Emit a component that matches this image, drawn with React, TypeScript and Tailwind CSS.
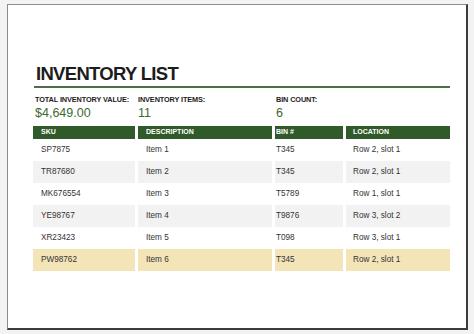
import React from 'react'

const rows = [
  { sku: 'SP7875', desc: 'Item 1', bin: 'T345', loc: 'Row 2, slot 1' },
  { sku: 'TR87680', desc: 'Item 2', bin: 'T345', loc: 'Row 2, slot 1' },
  { sku: 'MK676554', desc: 'Item 3', bin: 'T5789', loc: 'Row 1, slot 1' },
  { sku: 'YE98767', desc: 'Item 4', bin: 'T9876', loc: 'Row 3, slot 2' },
  { sku: 'XR23423', desc: 'Item 5', bin: 'T098', loc: 'Row 3, slot 1' },
  { sku: 'PW98762', desc: 'Item 6', bin: 'T345', loc: 'Row 2, slot 1' },
]

const cols = 'grid grid-cols-[102px_134px_68px_104px] gap-x-[3px]'

export default function App() {
  return (
    <div className="w-[474px] h-[334px] bg-[#f3f3f3] pt-[4px] pl-[7px] font-['Liberation_Sans',Arial,sans-serif]">
      <div className="w-[461px] h-[326px] bg-white border-t border-l border-t-[#8c8c8c] border-l-[#8c8c8c] border-r-2 border-b-2 border-r-[#3c3c3c] border-b-[#3c3c3c] pl-[25px]">
        {/* Title */}
        <div className="pt-[60px] pl-[3px] text-[18.5px] leading-[18px] font-bold tracking-[-0.7px] text-[#1c1c1c]">
          INVENTORY LIST
        </div>
        <div className="mt-[3px] ml-[1px] w-[416px] h-[2px] bg-[#4d6f45]" />

        {/* Summary */}
        <div className={`${cols} mt-[8px] text-[7.3px] leading-[7px] font-bold text-[#222] tracking-[-0.1px]`}>
          <div className="h-[11px] pl-[2px] whitespace-nowrap">TOTAL INVENTORY VALUE:</div>
          <div className="h-[11px]">INVENTORY ITEMS:</div>
          <div className="h-[11px] pl-[1px]">BIN COUNT:</div>
          <div />
        </div>
        <div className={`${cols} text-[12.5px] leading-[12.5px] text-[#3b6a32]`}>
          <div className="h-[19px] pl-[2px]">$4,649.00</div>
          <div className="h-[19px]">11</div>
          <div className="h-[19px] pl-[1px]">6</div>
          <div />
        </div>

        {/* Table */}
        <div className={`${cols} text-[7px] font-bold text-white`}>
          <div className="h-[13px] flex items-center pl-[8px] bg-[#315a2a]">SKU</div>
          <div className="h-[13px] flex items-center pl-[8px] bg-[#315a2a]">DESCRIPTION</div>
          <div className="h-[13px] flex items-center pl-[1px] bg-[#315a2a]">BIN #</div>
          <div className="h-[13px] flex items-center pl-[7px] bg-[#315a2a]">LOCATION</div>
        </div>
        {rows.map((r, i) => {
          const bg = i === 5 ? 'bg-[#f3e5b8]' : i % 2 === 1 ? 'bg-[#f2f2f2]' : 'bg-white'
          return (
            <div key={r.sku} className={`${cols} text-[8.2px] text-[#333]`}>
              <div className={`h-[22px] flex items-center pl-[8px] ${bg}`}>{r.sku}</div>
              <div className={`h-[22px] flex items-center pl-[8px] ${bg}`}>{r.desc}</div>
              <div className={`h-[22px] flex items-center pl-[1px] ${bg}`}>{r.bin}</div>
              <div className={`h-[22px] flex items-center pl-[7px] ${bg}`}>{r.loc}</div>
            </div>
          )
        })}
      </div>
    </div>
  )
}
